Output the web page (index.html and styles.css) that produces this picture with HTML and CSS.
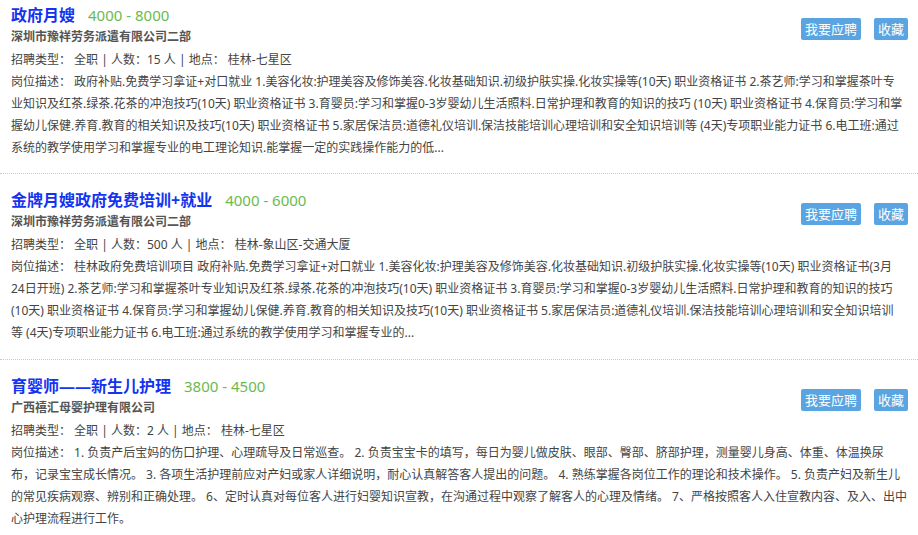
FILE: index.html
```html
<!DOCTYPE html>
<html lang="zh-CN">
<head>
<meta charset="utf-8">
<title>职位列表</title>
<link rel="stylesheet" href="styles.css">
</head>
<body>
<ul class="job-list">
  <li class="job first">
    <div class="job-head">
      <div class="job-main">
        <div class="title-row"><a class="job-title" href="#">政府月嫂</a><span class="salary">4000 - 8000</span></div>
        <div class="company">深圳市豫祥劳务派遣有限公司二部</div>
      </div>
      <div class="actions"><a class="btn" href="#">我要应聘</a><a class="btn" href="#">收藏</a></div>
    </div>
    <div class="meta">招聘类型： 全职 | 人数：15 人 | 地点： 桂林-七星区</div>
    <div class="desc">岗位描述： 政府补贴.免费学习拿证+对口就业 1.美容化妆:护理美容及修饰美容.化妆基础知识.初级护肤实操.化妆实操等(10天) 职业资格证书 2.茶艺师:学习和掌握茶叶专<br>业知识及红茶.绿茶.花茶的冲泡技巧(10天) 职业资格证书 3.育婴员:学习和掌握0-3岁婴幼儿生活照料.日常护理和教育的知识的技巧 (10天) 职业资格证书 4.保育员:学习和掌<br>握幼儿保健.养育.教育的相关知识及技巧(10天) 职业资格证书 5.家居保洁员:道德礼仪培训.保洁技能培训心理培训和安全知识培训等 (4天)专项职业能力证书 6.电工班:通过<br>系统的教学使用学习和掌握专业的电工理论知识.能掌握一定的实践操作能力的低...</div>
  </li>
  <li class="job">
    <div class="job-head">
      <div class="job-main">
        <div class="title-row"><a class="job-title" href="#">金牌月嫂政府免费培训+就业</a><span class="salary">4000 - 6000</span></div>
        <div class="company">深圳市豫祥劳务派遣有限公司二部</div>
      </div>
      <div class="actions"><a class="btn" href="#">我要应聘</a><a class="btn" href="#">收藏</a></div>
    </div>
    <div class="meta">招聘类型： 全职 | 人数：500 人 | 地点： 桂林-象山区-交通大厦</div>
    <div class="desc">岗位描述： 桂林政府免费培训项目 政府补贴.免费学习拿证+对口就业 1.美容化妆:护理美容及修饰美容.化妆基础知识.初级护肤实操.化妆实操等(10天) 职业资格证书(3月<br>24日开班) 2.茶艺师:学习和掌握茶叶专业知识及红茶.绿茶.花茶的冲泡技巧(10天) 职业资格证书 3.育婴员:学习和掌握0-3岁婴幼儿生活照料.日常护理和教育的知识的技巧<br>(10天) 职业资格证书 4.保育员:学习和掌握幼儿保健.养育.教育的相关知识及技巧(10天) 职业资格证书 5.家居保洁员:道德礼仪培训.保洁技能培训心理培训和安全知识培训<br>等 (4天)专项职业能力证书 6.电工班:通过系统的教学使用学习和掌握专业的...</div>
  </li>
  <li class="job">
    <div class="job-head">
      <div class="job-main">
        <div class="title-row"><a class="job-title" href="#">育婴师——新生儿护理</a><span class="salary">3800 - 4500</span></div>
        <div class="company">广西禧汇母婴护理有限公司</div>
      </div>
      <div class="actions"><a class="btn" href="#">我要应聘</a><a class="btn" href="#">收藏</a></div>
    </div>
    <div class="meta">招聘类型： 全职 | 人数：2 人 | 地点： 桂林-七星区</div>
    <div class="desc">岗位描述： 1. 负责产后宝妈的伤口护理、心理疏导及日常巡查。 2. 负责宝宝卡的填写，每日为婴儿做皮肤、眼部、臀部、脐部护理，测量婴儿身高、体重、体温换尿<br>布，记录宝宝成长情况。 3. 各项生活护理前应对产妇或家人详细说明，耐心认真解答客人提出的问题。 4. 熟练掌握各岗位工作的理论和技术操作。 5. 负责产妇及新生儿<br>的常见疾病观察、辨别和正确处理。 6、定时认真对每位客人进行妇婴知识宣教，在沟通过程中观察了解客人的心理及情绪。 7、严格按照客人入住宣教内容、及入、出中<br>心护理流程进行工作。</div>
  </li>
</ul>
</body>
</html>
```

FILE: styles.css
```css
html, body {
  margin: 0;
  padding: 0;
  background: #fff;
}
body {
  font-family: "Noto Sans", "Noto Sans CJK SC", sans-serif;
  font-size: 12px;
  color: #444;
}
.job-list {
  list-style: none;
  margin: 0;
  padding: 0;
}
.job {
  padding: 15px 10px 15px 11px;
  border-bottom: 1px dotted #c8c8c8;
}
.job.first {
  padding-top: 4px;
  padding-bottom: 14px;
}
.job-head {
  display: flex;
  justify-content: space-between;
  align-items: flex-start;
}
.title-row {
  display: flex;
  align-items: baseline;
  height: 22px;
  line-height: 22px;
}
.job-title {
  font-size: 16px;
  font-weight: bold;
  color: #1433f0;
  text-decoration: none;
}
.salary {
  margin-left: 13px;
  font-size: 15px;
  color: #6abb4e;
}
.company {
  line-height: 22px;
  font-weight: bold;
  color: #555;
}
.actions {
  display: flex;
  gap: 13px;
  margin-top: 14px;
}
.btn {
  display: block;
  height: 22px;
  line-height: 22px;
  padding: 0 4px;
  font-size: 13px;
  color: #fff;
  background: #5aa5e1;
  border-radius: 2px;
  text-decoration: none;
}
.meta {
  margin-top: 1px;
  line-height: 22px;
}
.desc {
  line-height: 22px;
  margin-right: -8px;
}
```
